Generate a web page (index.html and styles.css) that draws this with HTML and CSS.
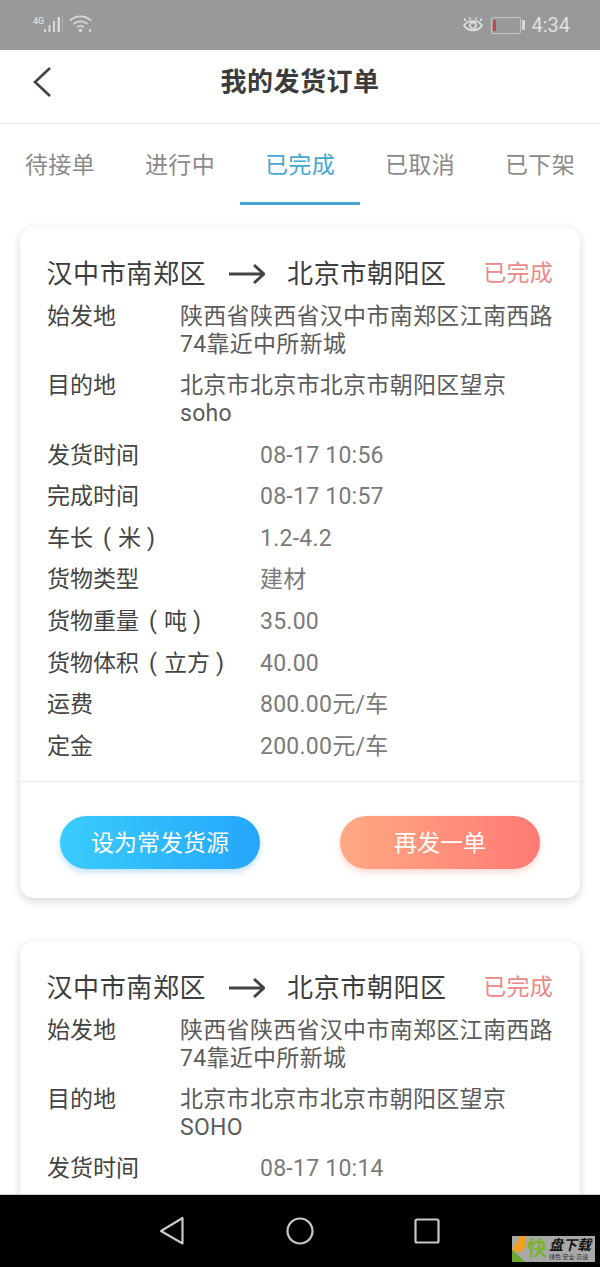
FILE: index.html
```html
<!DOCTYPE html>
<html lang="zh-CN">
<head>
<meta charset="utf-8">
<title>我的发货订单</title>
<link rel="stylesheet" href="styles.css">
</head>
<body>
<div class="app">
  <div class="status">
    <div class="status-left">
      <span class="net">4G</span>
      <svg class="signal" width="20" height="18" viewBox="0 0 20 18"><g fill="#d8d8d8"><rect x="0" y="13" width="2" height="3"/><rect x="4.500" y="9" width="2" height="7"/><rect x="9" y="5" width="2" height="11"/><rect x="13.500" y="1" width="2.500" height="15"/></g><rect x="18" y="0" width="1" height="17" fill="#adadad"/></svg>
      <svg class="wifi" width="24" height="20" viewBox="0 0 24 20"><g fill="none" stroke="#d8d8d8" stroke-width="1.700"><path d="M1 6.500 C7 1 16 1 22 6.500"/><path d="M4.500 10 C8.500 6.500 14.500 6.500 18.500 10"/><path d="M8 13.300 C10 11.700 13 11.700 15 13.300"/></g><circle cx="11.500" cy="16.500" r="1.800" fill="#d8d8d8"/><path d="M20 14.500 L23 16.500 L20 18.500Z" fill="#d8d8d8"/></svg>
    </div>
    <div class="status-right">
      <svg class="eye" width="20" height="18" viewBox="0 0 20 18"><g fill="none" stroke="#e2e2e2" stroke-width="1.600"><path d="M1 9.500 C5 3.500 15 3.500 19 9.500 C15 16 5 16 1 9.500Z"/><circle cx="10" cy="9.500" r="3"/><path d="M3 5 L1 2.500 M17 5 L19 2.500 M7 3.500 L6.500 1.500 M13 3.500 L13.500 1.500"/></g></svg>
      <div class="battery"><div class="battery-level"></div></div>
      <div class="battery-cap"></div>
      <span class="clock">4:34</span>
    </div>
  </div>

  <header class="header">
    <svg class="back" width="20" height="32" viewBox="0 0 20 32"><path d="M18 2 L3 16 L18 30" fill="none" stroke="#444" stroke-width="2.600"/></svg>
    <h1 class="title">我的发货订单</h1>
  </header>

  <nav class="tabs">
    <div class="tab">待接单</div>
    <div class="tab">进行中</div>
    <div class="tab tab-active">已完成</div>
    <div class="tab">已取消</div>
    <div class="tab">已下架</div>
  </nav>

  <main class="list">
    <section class="card">
      <div class="route">
        <span class="city">汉中市南郑区</span>
        <svg class="arrow" width="37" height="22" viewBox="0 0 37 22"><path d="M1 11 H35 M26 2 L36 11 L26 20" fill="none" stroke="#444" stroke-width="3"/></svg>
        <span class="city">北京市朝阳区</span>
        <span class="state">已完成</span>
      </div>
      <div class="addr"><span class="addr-label">始发地</span><span class="addr-value">陕西省陕西省汉中市南郑区江南西路74靠近中所新城</span></div>
      <div class="addr"><span class="addr-label">目的地</span><span class="addr-value">北京市北京市北京市朝阳区望京<br>soho</span></div>
      <div class="rows">
        <div class="row"><span class="row-label">发货时间</span><span class="row-value">08-17 10:56</span></div>
        <div class="row"><span class="row-label">完成时间</span><span class="row-value">08-17 10:57</span></div>
        <div class="row"><span class="row-label">车长<span class="paren-l">(</span>米<span class="paren-r">)</span></span><span class="row-value">1.2-4.2</span></div>
        <div class="row"><span class="row-label">货物类型</span><span class="row-value">建材</span></div>
        <div class="row"><span class="row-label">货物重量<span class="paren-l">(</span>吨<span class="paren-r">)</span></span><span class="row-value">35.00</span></div>
        <div class="row"><span class="row-label">货物体积<span class="paren-l">(</span>立方<span class="paren-r">)</span></span><span class="row-value">40.00</span></div>
        <div class="row"><span class="row-label">运费</span><span class="row-value">800.00元/车</span></div>
        <div class="row"><span class="row-label">定金</span><span class="row-value">200.00元/车</span></div>
      </div>
      <div class="actions">
        <div class="btn btn-blue">设为常发货源</div>
        <div class="btn btn-orange">再发一单</div>
      </div>
    </section>

    <section class="card card-cut">
      <div class="route">
        <span class="city">汉中市南郑区</span>
        <svg class="arrow" width="37" height="22" viewBox="0 0 37 22"><path d="M1 11 H35 M26 2 L36 11 L26 20" fill="none" stroke="#444" stroke-width="3"/></svg>
        <span class="city">北京市朝阳区</span>
        <span class="state">已完成</span>
      </div>
      <div class="addr"><span class="addr-label">始发地</span><span class="addr-value">陕西省陕西省汉中市南郑区江南西路74靠近中所新城</span></div>
      <div class="addr"><span class="addr-label">目的地</span><span class="addr-value">北京市北京市北京市朝阳区望京<br>SOHO</span></div>
      <div class="rows">
        <div class="row"><span class="row-label">发货时间</span><span class="row-value">08-17 10:14</span></div>
      </div>
    </section>
  </main>

  <footer class="navbar">
    <svg width="26" height="30" viewBox="0 0 26 30"><path d="M22.500 2 V27.500 L1 15Z" fill="none" stroke="#c8c8c8" stroke-width="2.200" stroke-linejoin="round"/></svg>
    <svg width="28" height="28" viewBox="0 0 28 28"><circle cx="14" cy="14" r="12.500" fill="none" stroke="#c8c8c8" stroke-width="2.200"/></svg>
    <svg width="26" height="26" viewBox="0 0 26 26"><rect x="1.500" y="1.500" width="23" height="23" rx="1.500" fill="none" stroke="#c8c8c8" stroke-width="2.200"/></svg>
  </footer>

  <div class="mark">
    <svg class="mark-logo" width="13" height="26" viewBox="0 0 13 26"><path d="M0 14 L8 0 H13 V12 L7 17Z" fill="#f0a020"/><path d="M0 14 L7 20 L13 26 H0Z" fill="#6aa82c"/></svg>
    <span class="mark-kuai">快</span>
    <div class="mark-text">
      <span class="mark-name">盘下载</span>
      <span class="mark-sub">绿色·安全·高速</span>
    </div>
  </div>
</div>
</body>
</html>
```
FILE: styles.css
```css
* { box-sizing: border-box; }
html, body { margin: 0; padding: 0; }
body {
  width: 600px;
  height: 1267px;
  overflow: hidden;
  font-family: Roboto, "Noto Sans CJK SC", sans-serif;
  background: #fff;
}
.app {
  position: relative;
  width: 600px;
  height: 1267px;
  display: flex;
  flex-direction: column;
  overflow: hidden;
}
.status {
  flex: none;
  height: 50px;
  background: #999;
  display: flex;
  justify-content: space-between;
  align-items: center;
  padding: 0 30px 0 33px;
}
.status-left { display: flex; align-items: flex-end; }
.net { font-size: 9px; line-height: 10px; color: #ddd; align-self: flex-start; font-weight: 500; width: 11px; }
.wifi { margin-left: 5px; margin-top: -2px; }
.status-right { display: flex; align-items: center; }
.eye { margin-right: 8px; }
.battery { width: 30px; height: 17px; border: 1px solid #c6c6c6; border-radius: 2px; padding: 2px 0 2px 1px; }
.battery-level { width: 3px; height: 100%; background: #c8474d; }
.battery-cap { width: 3px; height: 10px; background: #d8d8d8; margin-left: 1px; }
.clock { font-size: 20px; color: #e0e0e0; margin-left: 6px; line-height: 24px; }

.header {
  flex: none;
  height: 74px;
  position: relative;
  display: flex;
  align-items: center;
  justify-content: center;
  border-bottom: 1px solid #e6e6e6;
  padding-bottom: 10px;
  background: #fff;
}
.back { position: absolute; left: 32px; top: 16px; }
.title { margin: 0; font-size: 26px; font-weight: 700; letter-spacing: .5px; color: #3c3c3c; line-height: 36px; }

.tabs { flex: none; height: 81px; display: flex; }
.tab {
  width: 120px;
  height: 81px;
  padding-top: 2px;
  text-align: center;
  font-size: 23px;
  letter-spacing: .3px;
  line-height: 80px;
  color: #8a8a8a;
}
.tab-active { color: #45a8d2; border-bottom: 3px solid #45a8d2; }

.list {
  flex: 1;
  min-height: 0;
  overflow: hidden;
  padding: 22px 20px 0;
  display: flex;
  flex-direction: column;
  gap: 43px;
}
.card {
  flex: none;
  background: #fff;
  border-radius: 14px;
  box-shadow: 0 3px 10px rgba(0,0,0,.16);
  padding-top: 26px;
}
.card-cut { min-height: 400px; }
.route { display: flex; align-items: center; height: 43px; padding: 0 27px 1px 26.500px; }
.city { font-size: 26px; letter-spacing: .6px; color: #3d3d3d; line-height: 42px; white-space: nowrap; }
.arrow { margin: 0 22px; flex: none; }
.state { margin-left: auto; font-size: 23px; letter-spacing: .25px; color: #e98a88; line-height: 42px; }
.addr { display: flex; padding: 0 27px; margin-top: 7px; }
.addr-label { flex: none; width: 133px; font-size: 23px; color: #444; line-height: 28px; }
.addr-value { font-size: 23px; letter-spacing: .3px; color: #5c5c5c; line-height: 28px; margin-bottom: 6px; }
.rows { padding: 0 27px; margin-top: .700px; }
.row { display: flex; height: 41.600px; align-items: center; font-size: 23px; line-height: 41.600px; letter-spacing: .25px; }
.row-label { flex: none; width: 213px; color: #444; white-space: nowrap; letter-spacing: 0; }
.row-value { color: #7a7a7a; white-space: nowrap; }
.paren-l { margin: 0 7px 0 10px; }
.paren-r { margin-left: 6px; }
.actions {
  border-top: 1px solid #ececec;
  margin-top: 13.300px;
  height: 117px;
  padding: 34px 40px 0;
  display: flex;
  justify-content: space-between;
}
.btn {
  width: 200px;
  height: 53px;
  border-radius: 27px;
  text-align: center;
  font-size: 23px;
  line-height: 55px;
  color: #fff;
}
.btn-blue { background: linear-gradient(90deg, #3accfb, #25a6fc); box-shadow: 0 3px 6px rgba(40,150,230,.3); }
.btn-orange { background: linear-gradient(90deg, #ffa983, #ff7a74); box-shadow: 0 3px 6px rgba(240,120,100,.3); }

.navbar {
  flex: none;
  height: 73px;
  background: #000;
  border-top: 1px solid #ccc;
  display: flex;
  align-items: center;
  padding-left: 160px;
  gap: 100px;
  position: relative;
}
.mark {
  position: absolute;
  left: 512px;
  top: 1236px;
  width: 83px;
  height: 26px;
  background: #a8a8a8;
  display: flex;
  overflow: hidden;
}
.mark-logo { flex: none; }
.mark-kuai { font-size: 20px; line-height: 26px; color: #7db32e; width: 24px; text-align: center; font-weight: 700; }
.mark-text { display: flex; flex-direction: column; padding-top: 2px; }
.mark-name { font-size: 14px; line-height: 15px; font-weight: 700; font-style: italic; color: #111; white-space: nowrap; }
.mark-sub { font-size: 6px; line-height: 8px; color: #333; white-space: nowrap; }
```
